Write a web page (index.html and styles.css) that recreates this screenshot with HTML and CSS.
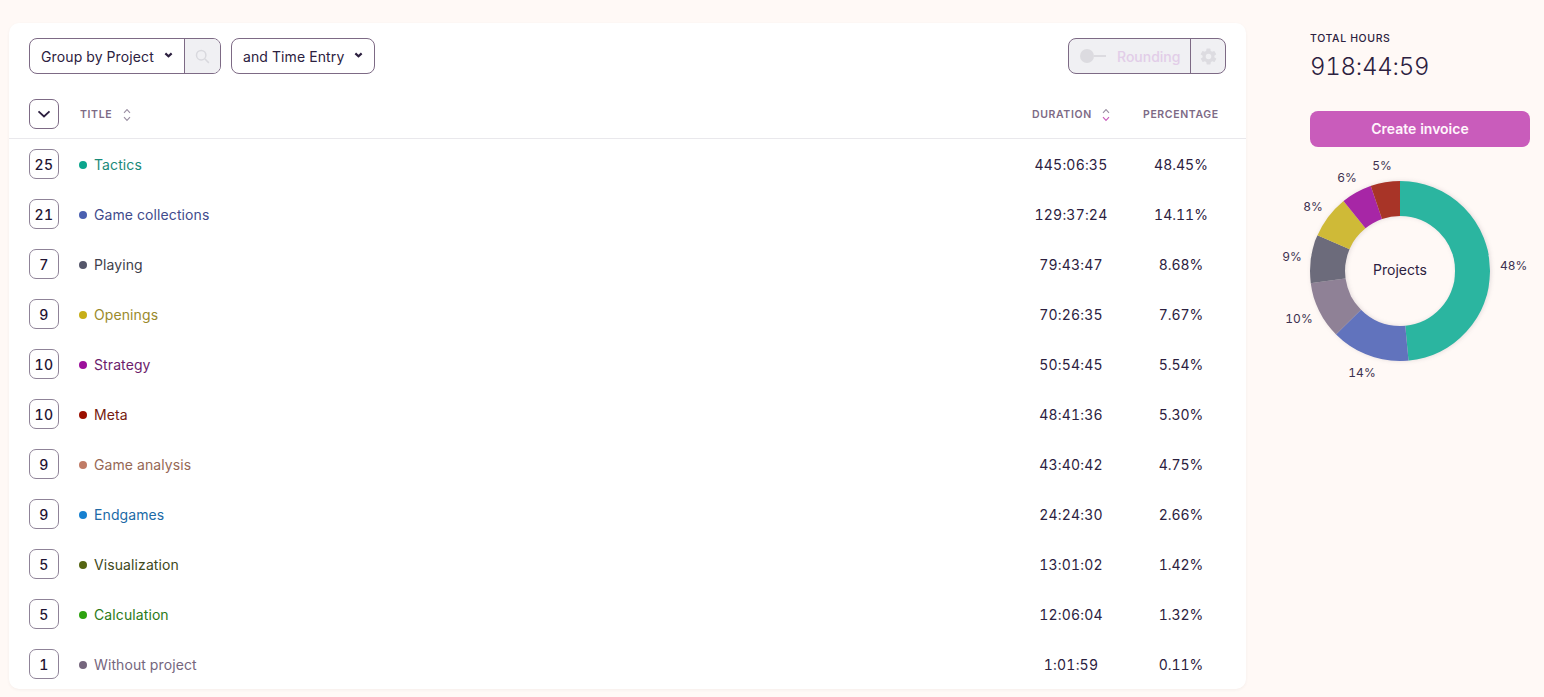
FILE: index.html
```html
<!DOCTYPE html>
<html lang="en">
<head>
<meta charset="utf-8">
<title>Reports</title>
<link rel="stylesheet" href="styles.css">
</head>
<body>
<div class="page">
  <main class="card">
    <div class="toolbar">
      <div class="group">
        <div class="select grow-left">Group by Project<svg class="caret" viewBox="0 0 10 6"><path d="M1.5 1.2 5 4.4l3.5-3.2"/></svg></div>
        <div class="search"><svg viewBox="0 0 16 16"><circle cx="6.6" cy="6.6" r="5"/><path d="m10.4 10.4 4.4 4.4"/></svg></div>
      </div>
      <div class="select single">and Time Entry<svg class="caret" viewBox="0 0 10 6"><path d="M1.5 1.2 5 4.4l3.5-3.2"/></svg></div>
      <div class="rounding">
        <div class="round-main">
          <span class="toggle"><span class="knob"></span><span class="track"></span></span>
          <span class="round-label">Rounding</span>
        </div>
        <div class="round-gear">
          <svg viewBox="0 0 24 24"><path d="M19.4 13a7.8 7.8 0 0 0 0-2l2.1-1.6a.5.5 0 0 0 .1-.6l-2-3.5a.5.5 0 0 0-.6-.2l-2.5 1a7.3 7.3 0 0 0-1.7-1l-.4-2.7a.5.5 0 0 0-.5-.4h-4a.5.5 0 0 0-.5.4l-.4 2.7a7.3 7.3 0 0 0-1.7 1l-2.5-1a.5.5 0 0 0-.6.2l-2 3.5a.5.5 0 0 0 .1.6L4.6 11a7.8 7.8 0 0 0 0 2l-2.1 1.6a.5.5 0 0 0-.1.6l2 3.5a.5.5 0 0 0 .6.2l2.5-1a7.3 7.3 0 0 0 1.7 1l.4 2.7a.5.5 0 0 0 .5.4h4a.5.5 0 0 0 .5-.4l.4-2.7a7.3 7.3 0 0 0 1.7-1l2.5 1a.5.5 0 0 0 .6-.2l2-3.5a.5.5 0 0 0-.1-.6L19.4 13zM12 15.5a3.5 3.5 0 1 1 0-7 3.5 3.5 0 0 1 0 7z"/></svg>
        </div>
      </div>
    </div>
    <div class="thead">
      <div class="count head-count"><svg class="chev" viewBox="0 0 14 8"><path d="M1.5 1.3 7 6.5l5.5-5.2"/></svg></div>
      <div class="th th-title">TITLE<svg class="sort" viewBox="0 0 8 14"><path d="M1 4.8 4 1.6l3 3.2"/><path d="M1 9.2l3 3.2 3-3.2"/></svg></div>
      <div class="th th-dur">DURATION<svg class="sort active" viewBox="0 0 8 14"><path d="M1 4.8 4 1.6l3 3.2"/><path class="down" d="M1 9.2l3 3.2 3-3.2"/></svg></div>
      <div class="th th-pct">PERCENTAGE</div>
    </div>
    <div class="row"><div class="count">25</div><div class="name c-tactics"><i></i>Tactics</div><div class="dur">445:06:35</div><div class="pct">48.45%</div></div>
    <div class="row"><div class="count">21</div><div class="name c-games"><i></i>Game collections</div><div class="dur">129:37:24</div><div class="pct">14.11%</div></div>
    <div class="row"><div class="count">7</div><div class="name c-playing"><i></i>Playing</div><div class="dur">79:43:47</div><div class="pct">8.68%</div></div>
    <div class="row"><div class="count">9</div><div class="name c-openings"><i></i>Openings</div><div class="dur">70:26:35</div><div class="pct">7.67%</div></div>
    <div class="row"><div class="count">10</div><div class="name c-strategy"><i></i>Strategy</div><div class="dur">50:54:45</div><div class="pct">5.54%</div></div>
    <div class="row"><div class="count">10</div><div class="name c-meta"><i></i>Meta</div><div class="dur">48:41:36</div><div class="pct">5.30%</div></div>
    <div class="row"><div class="count">9</div><div class="name c-analysis"><i></i>Game analysis</div><div class="dur">43:40:42</div><div class="pct">4.75%</div></div>
    <div class="row"><div class="count">9</div><div class="name c-endgames"><i></i>Endgames</div><div class="dur">24:24:30</div><div class="pct">2.66%</div></div>
    <div class="row"><div class="count">5</div><div class="name c-visual"><i></i>Visualization</div><div class="dur">13:01:02</div><div class="pct">1.42%</div></div>
    <div class="row"><div class="count">5</div><div class="name c-calc"><i></i>Calculation</div><div class="dur">12:06:04</div><div class="pct">1.32%</div></div>
    <div class="row"><div class="count">1</div><div class="name c-none"><i></i>Without project</div><div class="dur">1:01:59</div><div class="pct">0.11%</div></div>
  </main>
  <aside class="side">
    <div class="total-label">TOTAL HOURS</div>
    <div class="total-value">918:44:59</div>
    <div class="invoice">Create invoice</div>
    <svg class="donut" viewBox="0 0 260 250" role="img" aria-label="Projects">
      <g class="slices" transform="rotate(-90 120 125)">
        <circle class="s" cx="120" cy="125" r="72.5" pathLength="100" stroke="#2bb5a0" stroke-dasharray="48.45 100" stroke-dashoffset="0"/>
        <circle class="s" cx="120" cy="125" r="72.5" pathLength="100" stroke="#6173bd" stroke-dasharray="14.11 100" stroke-dashoffset="-48.45"/>
        <circle class="s" cx="120" cy="125" r="72.5" pathLength="100" stroke="#8f8196" stroke-dasharray="10.26 100" stroke-dashoffset="-62.56"/>
        <circle class="s" cx="120" cy="125" r="72.5" pathLength="100" stroke="#6c6b7b" stroke-dasharray="8.68 100" stroke-dashoffset="-72.82"/>
        <circle class="s" cx="120" cy="125" r="72.5" pathLength="100" stroke="#cfba37" stroke-dasharray="7.67 100" stroke-dashoffset="-81.5"/>
        <circle class="s" cx="120" cy="125" r="72.5" pathLength="100" stroke="#a726a6" stroke-dasharray="5.54 100" stroke-dashoffset="-89.17"/>
        <circle class="s" cx="120" cy="125" r="72.5" pathLength="100" stroke="#a83427" stroke-dasharray="5.3 100" stroke-dashoffset="-94.71"/>
      </g>
      <text class="center" x="120" y="129" text-anchor="middle">Projects</text>
      <text class="lbl" x="220" y="124">48%</text>
      <text class="lbl" x="82" y="231" text-anchor="middle">14%</text>
      <text class="lbl" x="19" y="177" text-anchor="middle">10%</text>
      <text class="lbl" x="12" y="115" text-anchor="middle">9%</text>
      <text class="lbl" x="33" y="65" text-anchor="middle">8%</text>
      <text class="lbl" x="67" y="36" text-anchor="middle">6%</text>
      <text class="lbl" x="102" y="24" text-anchor="middle">5%</text>
    </svg>
  </aside>
</div>
</body>
</html>
```
FILE: styles.css
```css
* { box-sizing: border-box; }
html, body { margin: 0; height: 697px; overflow: hidden; }
body {
  background: #fff9f6;
  color: #1f1433;
  font-family: Inter, "Noto Sans", sans-serif;
  font-size: 14px;
  font-variant-numeric: tabular-nums;
}
.page { display: flex; align-items: flex-start; padding: 23px 14px 0 9px; }
.card {
  width: 1237px;
  height: 666px;
  flex: none;
  background: #fff;
  border-radius: 10px;
  box-shadow: 0 1px 3px rgba(80, 60, 60, .06);
  overflow: hidden;
}
.toolbar { display: flex; align-items: center; gap: 10px; height: 71px; padding: 15px 20px 20px; }
.group { display: flex; height: 36px; border: 1px solid #7d6a85; border-radius: 8px; overflow: hidden; }
.select { display: flex; align-items: center; justify-content: space-between; height: 36px; padding: 0 11px; font-size: 14px; color: #2c2140; letter-spacing: .12px; }
.grow-left { width: 154px; height: 34px; padding-right: 11px; }
.single { width: 144px; border: 1px solid #7d6a85; border-radius: 8px; }
.caret { width: 9px; height: 6px; fill: none; stroke: #2c1f3f; stroke-width: 2.4; margin-top: -2px; }
.search { width: 36px; display: flex; align-items: center; justify-content: center; background: #f0f0f3; border-left: 1px solid #7d6a85; }
.search svg { width: 15px; height: 15px; fill: none; stroke: #d9d9de; stroke-width: 1.6; }
.rounding { display: flex; height: 36px; margin-left: auto; width: 158px; border: 1px solid #7d6a85; border-radius: 8px; overflow: hidden; background: #f0f0f3; }
.round-main { display: flex; align-items: center; width: 122px; padding-left: 11px; border-right: 1px solid #7d6a85; }
.toggle { display: flex; align-items: center; width: 26px; }
.knob { width: 14px; height: 14px; border-radius: 50%; background: #dcdbe0; flex: none; }
.track { width: 12px; height: 2px; background: #dcdbe0; }
.round-label { margin-left: 11px; font-size: 14px; font-weight: 500; color: #e2cde8; }
.round-gear { flex: 1; display: flex; align-items: center; justify-content: center; }
.round-gear svg { width: 19px; height: 19px; fill: #dddce1; }
.thead, .row { display: flex; align-items: center; padding-left: 20px; }
.thead { height: 45px; border-bottom: 1px solid #e9e8ec; padding-bottom: 3px; }
.row { height: 50px; }
.count {
  width: 30px; height: 30px; flex: none;
  display: flex; align-items: center; justify-content: center;
  border: 1px solid #8f8398; border-radius: 7px;
  font-size: 14px; font-weight: 500; color: #1f1433; letter-spacing: .5px;
}
.head-count { border-color: #7d6a85; margin-bottom: 1px; }
.chev { width: 14px; height: 8px; fill: none; stroke: #2c1f3f; stroke-width: 1.8; }
.th { display: flex; align-items: center; font-size: 10.5px; font-weight: 600; letter-spacing: .62px; color: #7d6a85; }
.sort { width: 8px; height: 14px; fill: none; stroke: #9a8ea2; stroke-width: 1.1; }
.th-title { flex: 1; padding-left: 21px; gap: 11px; }
.th-dur { width: 102px; padding-left: 12px; gap: 10px; }
.th-pct { width: 124px; padding-left: 21px; }
.active .down { stroke: #c95cbb; }
.name { flex: 1; display: flex; align-items: center; padding-left: 20px; font-size: 14px; letter-spacing: .1px; }
.name i { width: 8px; height: 8px; border-radius: 50%; margin: 1px 7px 0 0; background: currentColor; }
.dur { width: 102px; text-align: center; letter-spacing: .2px; color: #2c2140; }
.pct { width: 124px; padding-right: 6px; text-align: center; color: #2c2140; }
.c-tactics { color: #1a8a79; } .c-tactics i { background: #0ba58d; }
.c-games { color: #414b8c; } .c-games i { background: #4a5fb0; }
.c-playing { color: #3f3f4c; } .c-playing i { background: #55566a; }
.c-openings { color: #9a8a2c; } .c-openings i { background: #c7ae17; }
.c-strategy { color: #6c1c6c; } .c-strategy i { background: #9c0f9b; }
.c-meta { color: #761a10; } .c-meta i { background: #9b0f00; }
.c-analysis { color: #966855; } .c-analysis i { background: #c07b66; }
.c-endgames { color: #206aa6; } .c-endgames i { background: #1680d0; }
.c-visual { color: #40491a; } .c-visual i { background: #556512; }
.c-calc { color: #2b7a18; } .c-calc i { background: #2da20f; }
.c-none { color: #75667d; } .c-none i { background: #75667d; }
.side { width: 220px; flex: none; margin-left: 64px; }
.total-label { margin-top: 9px; font-size: 10.5px; font-weight: 500; letter-spacing: .62px; line-height: 13px; color: #2c2140; }
.total-value { margin-top: 7px; font-size: 24px; font-weight: 300; letter-spacing: -.27px; line-height: 30px; color: #2c2140; }
.invoice {
  margin-top: 29px; height: 36px;
  display: flex; align-items: center; justify-content: center;
  background: #c95cbb; border-radius: 8px;
  color: #fff5fb; font-size: 14px; font-weight: 600; padding-bottom: 1px;
}
.donut { display: block; width: 260px; height: 250px; margin: -1px 0 0 -30px; overflow: visible; }
.slices { filter: drop-shadow(0 1px 2px rgba(60, 40, 60, .15)); }
.s { fill: none; stroke-width: 35; }
.center { font-family: Inter, sans-serif; font-size: 14px; fill: #2c2140; }
.lbl { font-family: Inter, sans-serif; font-size: 12px; fill: #3d3150; }
```
